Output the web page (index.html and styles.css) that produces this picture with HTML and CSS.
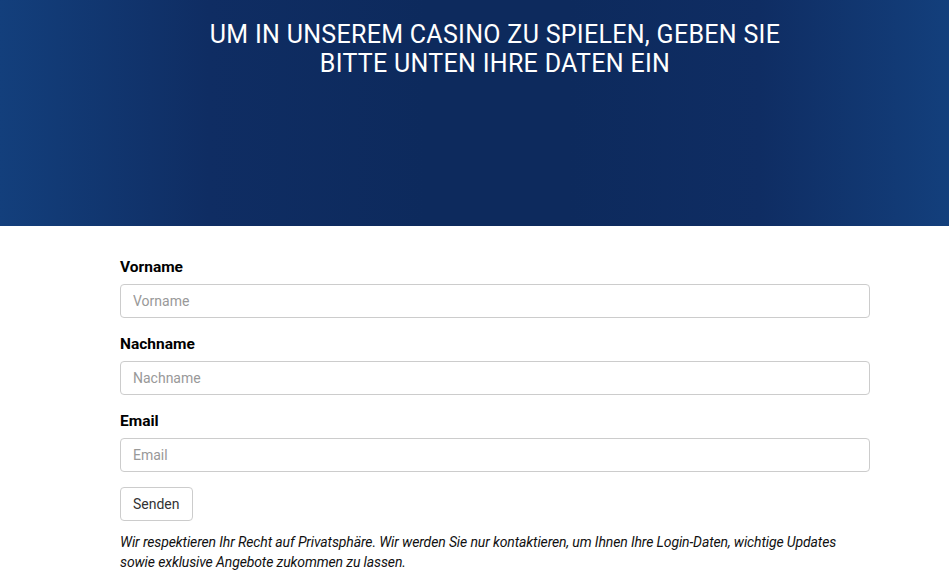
FILE: index.html
```html
<!DOCTYPE html>
<html lang="de">
<head>
<meta charset="utf-8">
<title>Casino</title>
<link rel="stylesheet" href="styles.css">
</head>
<body>
<header class="hero">
  <div class="wrap">
    <h1 class="hero-title">UM IN UNSEREM CASINO ZU SPIELEN, GEBEN SIE<br>BITTE UNTEN IHRE DATEN EIN</h1>
  </div>
</header>
<main class="content">
  <div class="wrap">
    <form class="form">
      <div class="group">
        <label class="label" for="vorname">Vorname</label>
        <input class="input" id="vorname" type="text" placeholder="Vorname">
      </div>
      <div class="group">
        <label class="label" for="nachname">Nachname</label>
        <input class="input" id="nachname" type="text" placeholder="Nachname">
      </div>
      <div class="group">
        <label class="label" for="email">Email</label>
        <input class="input" id="email" type="email" placeholder="Email">
      </div>
      <button class="btn" type="button">Senden</button>
      <p class="note">Wir respektieren Ihr Recht auf Privatsphäre. Wir werden Sie nur kontaktieren, um Ihnen Ihre Login-Daten, wichtige Updates sowie exklusive Angebote zukommen zu lassen.</p>
    </form>
  </div>
</main>
</body>
</html>
```
FILE: styles.css
```css
* { box-sizing: border-box; }
html, body { margin: 0; padding: 0; }
body {
  font-family: Roboto, "Liberation Sans", Arial, sans-serif;
  background: #fff;
  color: #111;
}
.wrap {
  width: 750px;
  margin-left: 120px;
}
.hero {
  height: 226px;
  padding-top: 21px;
  background: linear-gradient(to right, #133f7c 0%, #0f2d63 22%, #0d2a5d 45%, #0d2a5d 60%, #0f2d63 80%, #133f7c 100%);
}
.hero-title {
  margin: 0;
  color: #fff;
  font-weight: 400;
  font-size: 25px;
  letter-spacing: 0.3px;
  line-height: 28.5px;
  text-align: center;
}
.content {
  padding-top: 30px;
}
.form {
  display: flex;
  flex-direction: column;
  align-items: flex-start;
}
.group {
  display: flex;
  flex-direction: column;
  width: 100%;
  margin-bottom: 15px;
}
.label {
  font-weight: 700;
  font-size: 15.5px;
  line-height: 22px;
  margin-bottom: 6px;
  color: #000;
}
.input {
  height: 34px;
  width: 100%;
  border: 1px solid #ccc;
  border-radius: 4px;
  padding: 0 12px;
  font-family: inherit;
  font-size: 14px;
  color: #555;
  background: #fff;
}
.input::placeholder { color: #999; }
.btn {
  height: 34px;
  padding: 0 12px;
  border: 1px solid #ccc;
  border-radius: 4px;
  background: #fff;
  font-family: inherit;
  font-size: 14px;
  color: #333;
}
.note {
  margin: 12px 0 0;
  font-style: italic;
  font-size: 14px;
  letter-spacing: -0.12px;
  line-height: 19.5px;
  color: #111;
}
```
